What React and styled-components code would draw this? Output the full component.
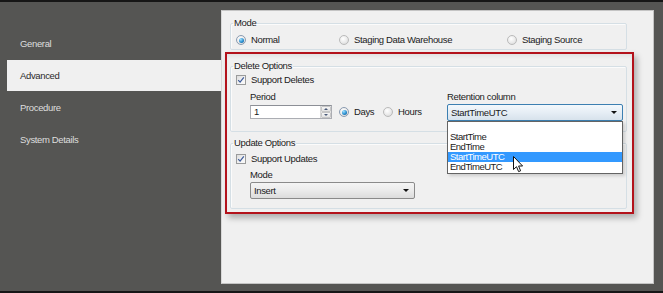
import React from 'react';
import styled, { createGlobalStyle } from 'styled-components';

const GlobalStyle = createGlobalStyle`
  html, body {
    margin: 0;
    padding: 0;
    background: #555553;
  }
  body {
    font-family: "Liberation Sans", Arial, sans-serif;
  }
`;

const Window = styled.div`
  display: flex;
  width: 663px;
  height: 293px;
  box-sizing: border-box;
  background: #555553;
  border-top: 2px solid #161616;
  border-bottom: 2px solid #161616;
  font-size: 9.5px;
  letter-spacing: -0.35px;
  color: #1b1b1b;
`;

const Nav = styled.nav`
  display: flex;
  flex-direction: column;
  gap: 1px;
  width: 221px;
  flex-shrink: 0;
  padding-top: 26px;
`;

const NavItem = styled.div`
  display: flex;
  align-items: center;
  height: 31px;
  margin-left: 7px;
  padding-left: 13px;
  color: ${({ $active }) => ($active ? '#2a2a2a' : '#dedede')};
  background: ${({ $active }) => ($active ? '#f0f0f0' : 'transparent')};
`;

const Panel = styled.main`
  flex: 1;
  display: flex;
  flex-direction: column;
  margin: 8px 9px 7px 0;
  padding: 0 19px 0 3px;
  background: #f0f0f0;
  border: 1px solid #c4c4c4;
  border-left-color: #d8d8d8;
`;

const GroupBox = styled.fieldset`
  margin: ${({ $margin }) => $margin || '0'};
  padding: ${({ $padding }) => $padding || '0 0 0 5px'};
  min-width: 0;
  border: 1px solid #d5dfe5;
  border-radius: 2px;
  box-shadow: inset 1px 1px 0 #fbfbfb;
`;

const Legend = styled.legend`
  padding: 0 1px;
  margin-left: -3px;
  line-height: 12px;
  color: #1b1b1b;
`;

const Highlight = styled.div`
  margin-top: 2px;
  padding: 0 5px 3px 3px;
  border: 2px solid #b3121b;
  box-shadow: 3px 4px 6px rgba(0, 0, 0, 0.28), inset 0 4px 4px -2px rgba(0, 0, 0, 0.07);
`;

const RadioRow = styled.div`
  display: flex;
  align-items: center;
  height: 14px;
`;

const Option = styled.label`
  display: flex;
  align-items: center;
  gap: 5px;
  width: ${({ $width }) => ($width ? `${$width}px` : 'auto')};
  flex-shrink: 0;
  line-height: 12px;
`;

const RadioDot = styled.span`
  position: relative;
  width: 10px;
  height: 10px;
  box-sizing: border-box;
  border-radius: 50%;
  border: 1px solid ${({ $checked }) => ($checked ? '#8a9bb0' : '#bababa')};
  background: radial-gradient(circle at 40% 35%, #ffffff 0%, #e8e8e8 60%, #d2d2d2 100%);

  &::after {
    content: '';
    display: ${({ $checked }) => ($checked ? 'block' : 'none')};
    position: absolute;
    left: 1.5px;
    top: 1.5px;
    width: 5px;
    height: 5px;
    border-radius: 50%;
    background: radial-gradient(circle at 35% 30%, #9fe0ff 0%, #2a8fd0 55%, #0d4f86 100%);
  }
`;

const CheckBox = styled.span`
  display: flex;
  align-items: center;
  justify-content: center;
  width: 10px;
  height: 10px;
  box-sizing: border-box;
  border: 1px solid #9a9b9b;
  background: linear-gradient(135deg, #dcdcdc 0%, #f7f7f7 70%);
`;

const SubBlock = styled.div`
  margin: ${({ $top }) => `${$top}px`} 0 0 14px;
`;

const Columns = styled.div`
  display: grid;
  grid-template-columns: 197px 176px;
  margin: 4px 0 0 14px;
`;

const Field = styled.div`
  position: relative;
  display: flex;
  flex-direction: column;
`;

const Caption = styled.div`
  height: 12px;
  line-height: 12px;
`;

const InputRow = styled.div`
  display: flex;
  align-items: center;
  margin-top: 2px;
  height: 14px;
`;

const NumberBox = styled.div`
  display: flex;
  align-items: stretch;
  width: 82px;
  height: 14px;
  box-sizing: border-box;
  margin-right: 7px;
  background: #fff;
  border: 1px solid #abadb3;
  border-top-color: #8c8f96;
`;

const NumberText = styled.span`
  flex: 1;
  padding-left: 3px;
  line-height: 12px;
`;

const Spinner = styled.div`
  display: flex;
  flex-direction: column;
  width: 10px;
  border-left: 1px solid #d6d6d6;
`;

const SpinButton = styled.div`
  flex: 1;
  display: flex;
  align-items: center;
  justify-content: center;
  background: linear-gradient(#f6f6f6, #e2e2e2);
  border: 1px solid #c7c7c7;
  border-radius: 1px;

  &::after {
    content: '';
    border-left: 2px solid transparent;
    border-right: 2px solid transparent;
    ${({ $down }) => ($down ? 'border-top' : 'border-bottom')}: 2px solid #4a5a78;
  }
`;

const Combo = styled.div`
  display: flex;
  align-items: center;
  justify-content: space-between;
  width: ${({ $width }) => `${$width}px`};
  height: 17px;
  box-sizing: border-box;
  margin-top: 1px;
  padding: 0 5px 0 3px;
  border: 1px solid ${({ $focused }) => ($focused ? '#3c7fb1' : '#8a8a8a')};
  border-radius: 2px;
  background: ${({ $focused }) =>
    $focused
      ? 'linear-gradient(#f3f8fc 0%, #e6eef5 50%, #d7e2ec 100%)'
      : 'linear-gradient(#f4f4f4 0%, #ebebeb 50%, #dcdcdc 100%)'};
`;

const Arrow = styled.span`
  width: 0;
  height: 0;
  border-left: 3px solid transparent;
  border-right: 3px solid transparent;
  border-top: 3px solid #111;
`;

const DropList = styled.ul`
  position: absolute;
  z-index: 5;
  left: 0;
  top: 30px;
  width: 176px;
  margin: 0;
  padding: 10px 0 1px;
  box-sizing: border-box;
  list-style: none;
  background: #fff;
  border: 1px solid #646464;
  box-shadow: 2px 2px 3px rgba(0, 0, 0, 0.15);
`;

const DropItem = styled.li`
  height: 10px;
  line-height: 10px;
  padding-left: 2px;
  letter-spacing: -0.5px;
  color: ${({ $selected }) => ($selected ? '#fff' : '#1b1b1b')};
  background: ${({ $selected }) => ($selected ? '#3399ff' : 'transparent')};
`;

const Pointer = styled.svg`
  position: absolute;
  left: 66px;
  top: 65px;
  z-index: 6;
`;

const Radio = ({ label, checked, width }) => (
  <Option $width={width}>
    <RadioDot $checked={checked} />
    {label}
  </Option>
);

const Check = ({ label }) => (
  <RadioRow>
    <Option>
      <CheckBox>
        <svg width="8" height="8" viewBox="0 0 8 8">
          <path d="M1.2 4.2 L3.1 6.2 L6.8 1.4" fill="none" stroke="#3b5a9a" strokeWidth="1.2" />
        </svg>
      </CheckBox>
      {label}
    </Option>
  </RadioRow>
);

const retentionOptions = ['StartTime', 'EndTime', 'StartTimeUTC', 'EndTimeUTC'];

const App = () => (
  <>
    <GlobalStyle />
    <Window>
      <Nav>
        <NavItem>General</NavItem>
        <NavItem $active>Advanced</NavItem>
        <NavItem>Procedure</NavItem>
        <NavItem>System Details</NavItem>
      </Nav>
      <Panel>
        <GroupBox $margin="6px 7px 0 5px" $padding="4px 0 2px 5px">
          <Legend>Mode</Legend>
          <RadioRow>
            <Radio label="Normal" checked width={103} />
            <Radio label="Staging Data Warehouse" width={168} />
            <Radio label="Staging Source" />
          </RadioRow>
        </GroupBox>
        <Highlight>
          <GroupBox $margin="6px 0 0" $padding="1px 0 10px 5px">
            <Legend>Delete Options</Legend>
            <Check label="Support Deletes" />
            <Columns>
              <Field>
                <Caption>Period</Caption>
                <InputRow>
                  <NumberBox>
                    <NumberText>1</NumberText>
                    <Spinner>
                      <SpinButton />
                      <SpinButton $down />
                    </Spinner>
                  </NumberBox>
                  <Radio label="Days" checked width={44} />
                  <Radio label="Hours" />
                </InputRow>
              </Field>
              <Field>
                <Caption>Retention column</Caption>
                <Combo $width={176} $focused>
                  StartTimeUTC
                  <Arrow />
                </Combo>
                <DropList>
                  {retentionOptions.map((name) => (
                    <DropItem key={name} $selected={name === 'StartTimeUTC'}>
                      {name}
                    </DropItem>
                  ))}
                </DropList>
                <Pointer width="11" height="17" viewBox="0 0 11 17">
                  <path
                    d="M0.5 0.5 L0.5 13.5 L3.5 10.7 L5.6 15.6 L7.6 14.8 L5.6 10 L9.6 10 Z"
                    fill="#fff"
                    stroke="#111"
                    strokeWidth="1"
                    strokeLinejoin="round"
                  />
                </Pointer>
              </Field>
            </Columns>
          </GroupBox>
          <GroupBox $margin="5px 0 0" $padding="3px 0 9px 5px">
            <Legend>Update Options</Legend>
            <Check label="Support Updates" />
            <SubBlock $top={3}>
              <Caption>Mode</Caption>
              <Combo $width={165}>
                Insert
                <Arrow />
              </Combo>
            </SubBlock>
          </GroupBox>
        </Highlight>
      </Panel>
    </Window>
  </>
);

export default App;
